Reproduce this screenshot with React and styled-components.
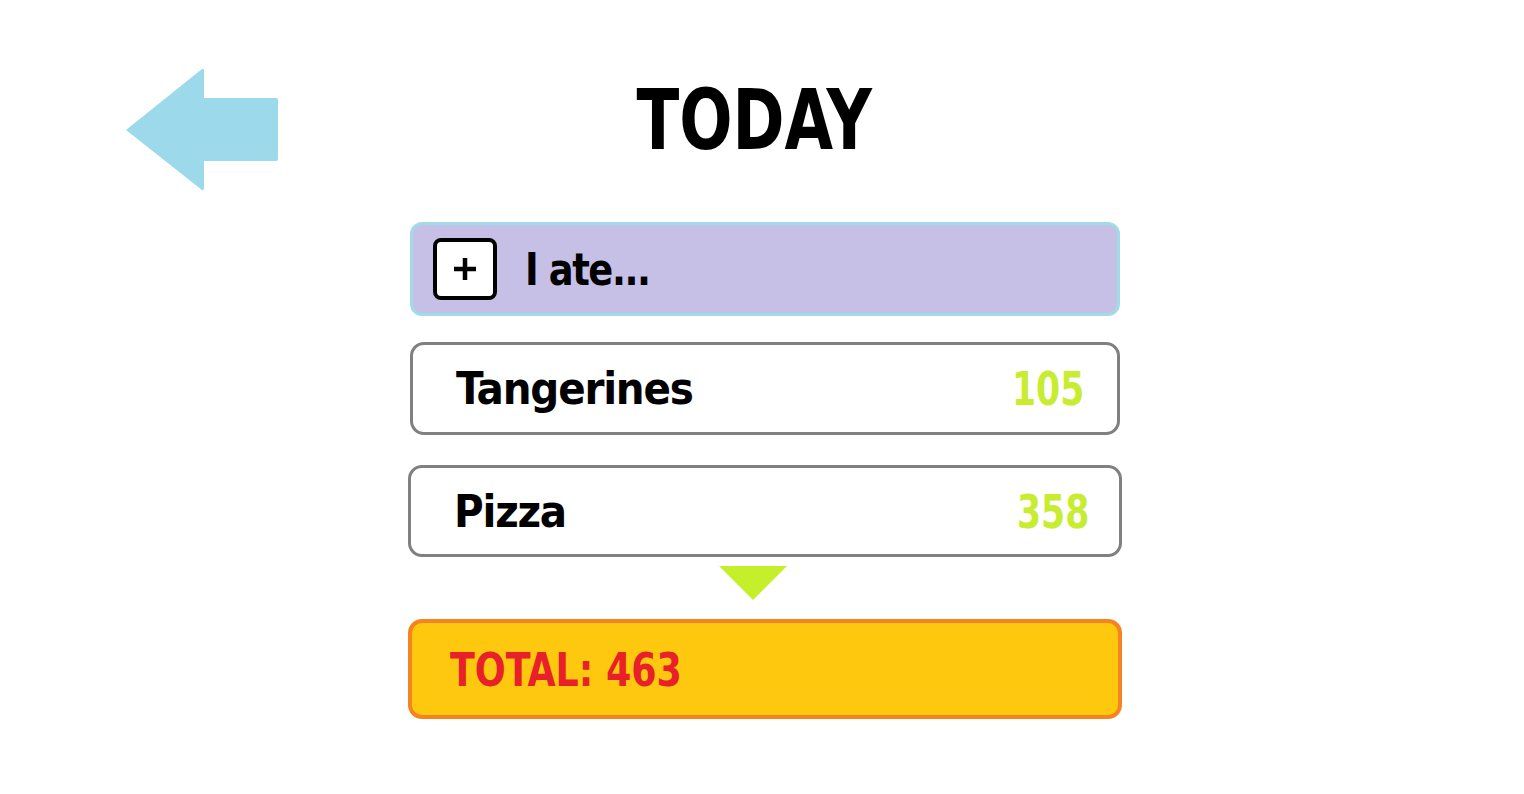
import styled, { createGlobalStyle } from "styled-components";

const GlobalStyle = createGlobalStyle`
  body {
    margin: 0;
    background: #ffffff;
    font-family: "DejaVu Sans Condensed", "DejaVu Sans", Roboto, sans-serif;
    font-weight: bold;
  }
`;

// the reference face is narrower than DejaVu Condensed, squeeze it a bit
const Squeeze = styled.span`
  display: inline-block;
  transform: scaleX(${(p) => p.$x});
  transform-origin: ${(p) => p.$origin || "center"};
`;

const Page = styled.div`
  display: grid;
  grid-template-columns: 408px 714px;
  grid-template-rows: 222px auto;
  width: 1524px;
  height: 794px;
`;

const BackButton = styled.button`
  align-self: start;
  margin: 68px 0 0 126px;
  padding: 0;
  width: 152px;
  height: 123px;
  border: none;
  background: none;
  cursor: pointer;
`;

const Title = styled.h1`
  margin: 0;
  padding: 73px 22px 0 0;
  text-align: center;
  font-size: 83px;
  line-height: 96px;
  color: #000000;
`;

const List = styled.div`
  grid-column: 2;
  display: flex;
  flex-direction: column;
  align-items: stretch;
`;

const AddBar = styled.div`
  display: flex;
  align-items: center;
  gap: 28px;
  margin: 0 2px;
  height: 94px;
  padding: 0 20px;
  box-sizing: border-box;
  border: 3px solid #a0dbe8;
  border-radius: 12px;
  background: #c6c0e6;
  font-size: 44px;
  letter-spacing: -1.5px;
  color: #000000;
`;

const PlusBox = styled.span`
  display: flex;
  align-items: center;
  justify-content: center;
  width: 64px;
  height: 62px;
  box-sizing: border-box;
  border: 4px solid #000000;
  border-radius: 8px;
  background: #ffffff;
`;

const Row = styled.div`
  display: flex;
  align-items: center;
  justify-content: space-between;
  margin: ${(p) => p.$top}px ${(p) => p.$side}px 0;
  height: ${(p) => p.$height}px;
  padding: 0 ${(p) => p.$pad}px 0 43px;
  box-sizing: border-box;
  border: 3px solid #808080;
  border-radius: 14px;
  background: #ffffff;
  font-size: 45px;
`;

const Name = styled.span`
  color: #000000;
  letter-spacing: -1.2px;
`;

const Calories = styled.span`
  font-size: 47px;
  color: #c8ec30;
`;

const Pointer = styled.div`
  align-self: center;
  margin: 9px 0 0 -24px;
  width: 68px;
  height: 34px;
  background: #c5ef2a;
  clip-path: polygon(0 0, 100% 0, 50% 100%);
`;

const TotalBar = styled.div`
  display: flex;
  align-items: center;
  margin-top: 19px;
  height: 100px;
  padding: 0 38px;
  box-sizing: border-box;
  border: 4px solid #f5831f;
  border-radius: 14px;
  background: #fec80e;
  font-size: 47px;
  color: #e8202a;
`;

const items = [
  { name: "Tangerines", kcal: 105, top: 26, side: 2, height: 93, pad: 33 },
  { name: "Pizza", kcal: 358, top: 30, side: 0, height: 92, pad: 30 },
];

const App = () => {
  const total = items.reduce((sum, item) => sum + item.kcal, 0);
  return (
    <>
      <GlobalStyle />
      <Page>
        <BackButton aria-label="Back">
          <svg width="152" height="123" viewBox="0 0 152 123">
            <path
              d="M0 62 L76 1 Q78 0 78 3 L78 30 L150 30 Q152 30 152 32 L152 91 Q152 93 150 93 L78 93 L78 120 Q78 123 76 122 Z"
              fill="#9cd9ea"
            />
          </svg>
        </BackButton>
        <Title>
          <Squeeze $x={0.84}>TODAY</Squeeze>
        </Title>
        <List>
          <AddBar>
            <PlusBox>
              <svg width="24" height="24" viewBox="0 0 24 24">
                <path d="M12 1 V23 M1 12 H23" stroke="#000" strokeWidth="4.5" />
              </svg>
            </PlusBox>
            <Squeeze $x={0.93} $origin="left">I ate...</Squeeze>
          </AddBar>
          {items.map((item) => (
            <Row
              key={item.name}
              $top={item.top}
              $side={item.side}
              $height={item.height}
              $pad={item.pad}
            >
              <Name>{item.name}</Name>
              <Calories>
                <Squeeze $x={0.82} $origin="right">{item.kcal}</Squeeze>
              </Calories>
            </Row>
          ))}
          <Pointer />
          <TotalBar>
            <Squeeze $x={0.86} $origin="left">TOTAL: {total}</Squeeze>
          </TotalBar>
        </List>
      </Page>
    </>
  );
};

export default App;
